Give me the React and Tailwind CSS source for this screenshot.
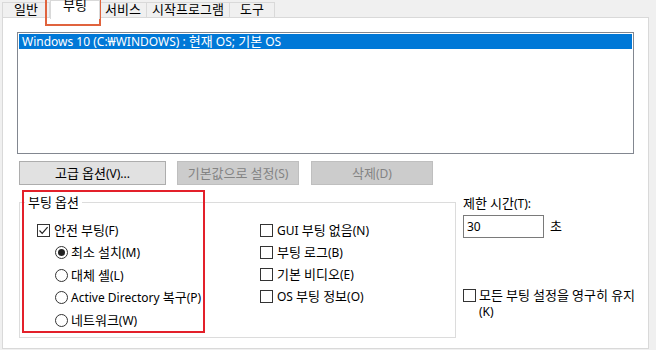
import React from 'react';

// Hangul runs are set a bit larger so they match the wider Korean glyphs of the original UI font
function T({ children }) {
  const parts = String(children).split(/([가-힣]+)/);
  return (
    <>
      {parts.map((p, i) =>
        /[가-힣]/.test(p) ? (
          <span key={i} className="text-[13px]">{p}</span>
        ) : (
          <React.Fragment key={i}>{p}</React.Fragment>
        )
      )}
    </>
  );
}

function CheckBox({ checked }) {
  return (
    <span className="w-[13px] h-[13px] border border-[#333333] bg-white shrink-0 flex items-center justify-center">
      {checked && (
        <svg width="11" height="11" viewBox="0 0 11 11" fill="none">
          <path d="M1.5 5.5 L4.2 8.3 L9.6 2.2" stroke="#222" strokeWidth="1.2" />
        </svg>
      )}
    </span>
  );
}

function Radio({ checked }) {
  return (
    <span className="w-[13px] h-[13px] rounded-full border border-[#333333] bg-white shrink-0 flex items-center justify-center">
      {checked && <span className="w-[7px] h-[7px] rounded-full bg-[#222222]" />}
    </span>
  );
}

function Check({ label, checked }) {
  return (
    <div className="h-[22px] flex items-center">
      <CheckBox checked={checked} />
      <span className="ml-[4px] whitespace-nowrap"><T>{label}</T></span>
    </div>
  );
}

function Opt({ label, checked }) {
  return (
    <div className="h-[22.5px] flex items-center">
      <Radio checked={checked} />
      <span className="ml-[3px] whitespace-nowrap"><T>{label}</T></span>
    </div>
  );
}

export default function App() {
  const tabs = [
    { label: '일반', w: 'w-[48px]' },
    { label: '부팅', w: 'w-[50px]', active: true },
    { label: '서비스', w: 'w-[48px]' },
    { label: '시작프로그램', w: 'w-[84px]' },
    { label: '도구', w: 'w-[46px]' },
  ];

  return (
    <div className="relative w-[656px] h-[350px] bg-[#f0f0f0] overflow-hidden text-[12px] leading-[14px] text-black font-['Noto_Sans','Noto_Sans_CJK_KR',sans-serif]">
      {/* tabs */}
      <div className="flex items-end h-[17px] pl-[2px]">
        {tabs.map((t, i) =>
          t.active ? (
            <div key={i} className={`${t.w} h-[19px] -mb-[2px] relative z-10 bg-white border border-b-0 border-[#d9d9d9] flex justify-center`}>
              <span className="-mt-[3px]"><T>{t.label}</T></span>
            </div>
          ) : (
            <div key={i} className={`${t.w} h-[15px] bg-[#f0f0f0] border border-b-0 border-[#d9d9d9] -ml-px first:ml-0 flex items-center justify-center`}>
              <span className="-mt-[1px]"><T>{t.label}</T></span>
            </div>
          )
        )}
      </div>

      {/* panel */}
      <div className="ml-[2px] w-[647px] h-[332px] bg-white border border-[#d9d9d9]">
        <div className="ml-[14px] mt-[14px] w-[617px] h-[122px] border border-[#828790] p-[1px]">
          <div className="h-[15px] bg-[#0078d7] text-white pl-[3px] leading-[15px] whitespace-nowrap">
            <T>Windows 10 (C:₩WINDOWS) : 현재 OS; 기본 OS</T>
          </div>
        </div>

        <div className="ml-[16px] mt-[7px] flex">
          <button className="w-[147px] h-[24px] bg-[#e1e1e1] border border-[#adadad] text-black"><T>고급 옵션(V)...</T></button>
          <button className="ml-[11px] w-[122px] h-[24px] bg-[#cccccc] border border-[#bfbfbf] text-[#838383]"><T>기본값으로 설정(S)</T></button>
          <button className="ml-[12px] w-[122px] h-[24px] bg-[#cccccc] border border-[#bfbfbf] text-[#838383]"><T>삭제(D)</T></button>
        </div>

        <div className="ml-[16px] mt-[11px] flex">
          <div className="pt-[6px]">
            <div className="relative w-[437px] h-[136px] border border-[#dcdcdc] flex">
              <span className="absolute -top-[8px] left-[5px] px-[3px] bg-white"><T>부팅 옵션</T></span>
              <div className="w-[223px] pl-[17px] pt-[16px]">
                <Check label="안전 부팅(F)" checked />
                <div className="pl-[18px] pt-[0.5px]">
                  <Opt label="최소 설치(M)" checked />
                  <Opt label="대체 셸(L)" />
                  <Opt label="Active Directory 복구(P)" />
                  <Opt label="네트워크(W)" />
                </div>
              </div>
              <div className="pt-[16px] pl-[17px]">
                <Check label="GUI 부팅 없음(N)" />
                <Check label="부팅 로그(B)" />
                <Check label="기본 비디오(E)" />
                <Check label="OS 부팅 정보(O)" />
              </div>
            </div>
          </div>

          <div className="ml-[7px] flex flex-col">
            <span><T>제한 시간(T):</T></span>
            <div className="mt-[4px] flex items-center">
              <div className="w-[81px] h-[23px] border border-[#7a7a7a] pl-[3px] flex items-center">30</div>
              <span className="ml-[6px]"><T>초</T></span>
            </div>
            <div className="mt-[51px] flex items-start">
              <CheckBox />
              <span className="ml-[3px] -mt-[2px] leading-[16px]">
                <T>모든 부팅 설정을 영구히 유지</T>
                <br />
                (K)
              </span>
            </div>
          </div>
        </div>
      </div>

      {/* highlight overlays */}
      <div className="absolute left-[45px] -top-[2px] w-[56px] h-[28px] border-2 border-[#e0633d] pointer-events-none" />
      <div className="absolute left-[22px] top-[190px] w-[183px] h-[143px] border-2 border-[#e3202a] pointer-events-none" />
    </div>
  );
}
